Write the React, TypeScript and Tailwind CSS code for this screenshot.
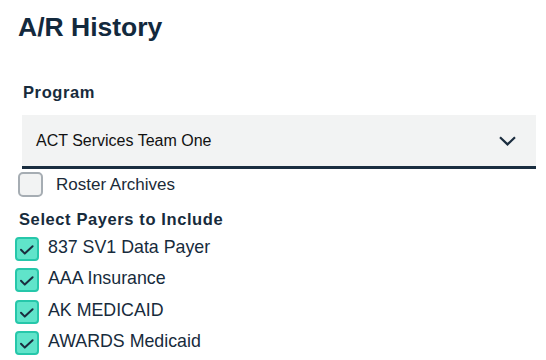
import React from 'react';

const payers = ['837 SV1 Data Payer', 'AAA Insurance', 'AK MEDICAID', 'AWARDS Medicaid'];

function Check() {
  return (
    <svg width="24" height="24" viewBox="0 0 24 24" fill="none" className="absolute -left-[2px] -top-[2px]">
      <path d="M6 12.8 L9.8 16.6 L17.6 9.2" stroke="#1b2d3f" strokeWidth="2" strokeLinecap="round" strokeLinejoin="round" />
    </svg>
  );
}

export default function App() {
  return (
    <div className="w-[546px] h-[360px] bg-white text-[#172b3c] pt-[11.5px] overflow-hidden" style={{ fontFamily: '"Liberation Sans", Arial, sans-serif' }}>
      <h1 className="ml-[18px] text-[26.5px] leading-[30px] font-bold text-[#13293d]">A/R History</h1>

      <div className="mt-[40px] ml-[23px] text-[16.5px] leading-[20px] font-bold tracking-[0.6px]">Program</div>

      <div className="mt-[13.5px] ml-[22px] w-[514px] h-[54px] bg-[#f2f3f3] border-b-[3px] border-[#1a2e40] flex items-center justify-between pl-[14px] pr-[20px]">
        <span className="text-[16px] text-[#111]">ACT Services Team One</span>
        <svg width="17" height="10" viewBox="0 0 17 10" fill="none">
          <path d="M1 1.2 L8.5 8.4 L16 1.2" stroke="#1b2d3f" strokeWidth="2.2" />
        </svg>
      </div>

      <label className="mt-[3px] ml-[18px] flex items-center gap-[13px]">
        <span className="w-[25px] h-[25px] rounded-[5px] border-2 border-[#a6adb3] bg-[#f2f3f3]" />
        <span className="text-[17px] leading-[24px] text-[#1b2a38]">Roster Archives</span>
      </label>

      <div className="mt-[11.5px] ml-[19px] text-[16.5px] leading-[20px] font-bold tracking-[0.6px]">Select Payers to Include</div>

      <div className="mt-[8.5px] ml-[15px] flex flex-col gap-[7.33px]">
        {payers.map((p) => (
          <div key={p} className="flex items-start gap-[9px]">
            <span className="relative w-[24px] h-[24px] rounded-[4px] border-2 border-[#26c7aa] bg-[#60e4ca]">
              <Check />
            </span>
            <span className="text-[17.8px] leading-[20px] text-[#172b3c]">{p}</span>
          </div>
        ))}
      </div>
    </div>
  );
}
